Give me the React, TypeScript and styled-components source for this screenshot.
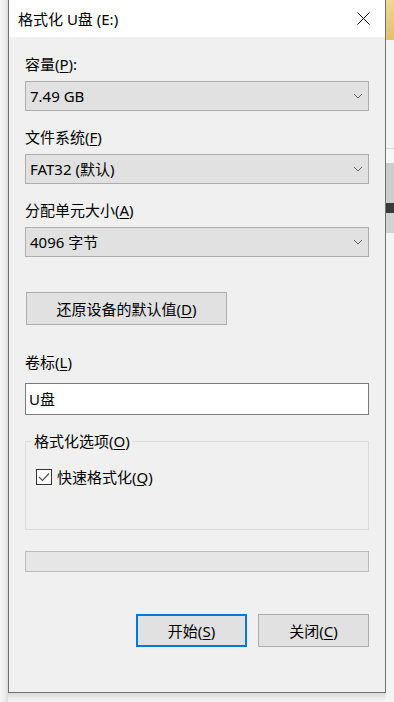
import React from 'react';
import styled, {createGlobalStyle} from 'styled-components';

const GlobalStyle = createGlobalStyle`
  html, body {
    margin: 0;
    padding: 0;
    background: #f4f4f4;
  }

  body {
    font-family: "Segoe UI", "Noto Sans", "Noto Sans CJK SC", sans-serif;
    font-size: 15px;
    line-height: 20px;
    color: #000000;
  }

  u {
    text-decoration-thickness: 1px;
    text-underline-offset: 2px;
  }
`;

const Screen = styled.div`
  display: flex;
  width: 394px;
  height: 702px;
  overflow: hidden;
`;

const LeftShade = styled.div`
  width: 8px;
  flex: none;
  background: linear-gradient(to right, #f6f6f6 0%, #ececec 60%, #d9d9d9 100%);
`;

const WindowColumn = styled.div`
  width: 378px;
  flex: none;
  display: flex;
  flex-direction: column;
`;

const Window = styled.div`
  display: flex;
  flex-direction: column;
  border: 1px solid #707070;
  border-top: none;
  background: #f0f0f0;
`;

const BottomShade = styled.div`
  flex: 1;
  background: linear-gradient(to bottom, #dadada 0%, #ececec 60%, #f5f5f5 100%);
`;

const Backdrop = styled.div`
  width: 8px;
  flex: none;
  display: flex;
  flex-direction: column;
  background: #f3f3f3;
`;

const Band = styled.div<{ $h: number; $bg: string }>`
  height: ${p => p.$h}px;
  flex: none;
  background: ${p => p.$bg};
`;

const TitleBar = styled.div`
  height: 37px;
  display: flex;
  align-items: center;
  justify-content: space-between;
  background: #ffffff;
  padding-left: 9px;
`;

const Title = styled.span`
  font-size: 15px;
  line-height: 20px;
  white-space: nowrap;
`;

const CloseButton = styled.div`
  width: 44px;
  height: 37px;
  display: flex;
  align-items: center;
  justify-content: center;
`;

const Body = styled.div`
  display: flex;
  flex-direction: column;
  padding: 17px 16px 45px 16px;
`;

const Label = styled.div<{ $gap?: number }>`
  height: 20px;
  line-height: 20px;
  margin-bottom: ${p => p.$gap ?? 7}px;
  white-space: nowrap;
`;

const Field = styled.div`
  display: flex;
  flex-direction: column;
  margin-bottom: 16px;
`;

const Select = styled.div`
  height: 30px;
  box-sizing: border-box;
  border: 1px solid #adadad;
  background: #e1e1e1;
  display: flex;
  align-items: center;
  justify-content: space-between;
  padding: 0 5px 0 4px;
`;

const Button = styled.div<{ $primary?: boolean; $width: number }>`
  width: ${p => p.$width}px;
  height: 33px;
  box-sizing: border-box;
  border: ${p => (p.$primary ? '2px solid #0078d7' : '1px solid #adadad')};
  background: #e1e1e1;
  display: flex;
  align-items: center;
  justify-content: center;
  white-space: nowrap;
`;

const RestoreButton = styled(Button)`
  margin: 19px 0 0 1px;
`;

const TextInput = styled.div`
  height: 32px;
  box-sizing: border-box;
  border: 1px solid #7a7a7a;
  background: #ffffff;
  display: flex;
  align-items: center;
  padding-left: 3px;
`;

const Group = styled.fieldset`
  margin: 16px 0 0 0;
  padding: 0;
  border: 1px solid #dcdcdc;
  min-width: 0;
`;

const Legend = styled.legend`
  margin-left: 5px;
  padding: 0 3px;
  line-height: 20px;
  white-space: nowrap;
`;

const GroupInner = styled.div`
  height: 78px;
  box-sizing: border-box;
  padding: 16px 0 0 10px;
`;

const CheckRow = styled.div`
  display: flex;
  align-items: center;
  gap: 5px;
  height: 20px;
`;

const CheckBox = styled.div`
  width: 16px;
  height: 16px;
  box-sizing: border-box;
  border: 1px solid #333333;
  background: #ffffff;
  display: flex;
  align-items: center;
  justify-content: center;
`;

const Progress = styled.div`
  height: 21px;
  margin-top: 21px;
  box-sizing: border-box;
  border: 1px solid #bcbcbc;
  background: #e6e6e6;
`;

const ButtonRow = styled.div`
  display: flex;
  justify-content: flex-end;
  gap: 11px;
  margin-top: 42px;
`;

const Chevron = () => (
  <svg width="10" height="6" viewBox="0 0 10 6">
    <path d="M1 1 L5 5 L9 1" fill="none" stroke="#606060" strokeWidth="1"/>
  </svg>
);

const CloseIcon = () => (
  <svg width="13" height="13" viewBox="0 0 13 13">
    <path d="M0.5 0.5 L12.5 12.5 M12.5 0.5 L0.5 12.5" stroke="#000000" strokeWidth="1"/>
  </svg>
);

const CheckMark = () => (
  <svg width="12" height="10" viewBox="0 0 12 10">
    <path d="M1 5 L4.5 8.5 L11 1.5" fill="none" stroke="#555555" strokeWidth="1.2"/>
  </svg>
);

type FieldData = { label: React.ReactNode; value: string };

const fields: FieldData[] = [
  {label: <>容量(<u>P</u>):</>, value: '7.49 GB'},
  {label: <>文件系统(<u>F</u>)</>, value: 'FAT32 (默认)'},
  {label: <>分配单元大小(<u>A</u>)</>, value: '4096 字节'},
];

const backdrop = [
  {h: 40, bg: 'linear-gradient(160deg, #f1d894, #e2bf6e)'},
  {h: 108, bg: '#f4f4f4'},
  {h: 1, bg: '#d6d6d6'},
  {h: 14, bg: '#f7f7f7'},
  {h: 40, bg: '#cdcdcd'},
  {h: 10, bg: '#3a3a3a'},
  {h: 20, bg: '#d2d2d2'},
  {h: 469, bg: '#f4f4f4'},
];

export default function App() {
  return (
    <>
      <GlobalStyle/>
      <Screen>
        <LeftShade/>
        <WindowColumn>
          <Window>
            <TitleBar>
              <Title>格式化 U盘 (E:)</Title>
              <CloseButton><CloseIcon/></CloseButton>
            </TitleBar>
            <Body>
              {fields.map((f, i) => (
                <Field key={i}>
                  <Label>{f.label}</Label>
                  <Select>
                    <span>{f.value}</span>
                    <Chevron/>
                  </Select>
                </Field>
              ))}
              <RestoreButton $width={201}>还原设备的默认值(<u>D</u>)</RestoreButton>
              <Label $gap={11} style={{marginTop: 27}}>卷标(<u>L</u>)</Label>
              <TextInput>U盘</TextInput>
              <Group>
                <Legend>格式化选项(<u>O</u>)</Legend>
                <GroupInner>
                  <CheckRow>
                    <CheckBox><CheckMark/></CheckBox>
                    <span>快速格式化(<u>Q</u>)</span>
                  </CheckRow>
                </GroupInner>
              </Group>
              <Progress/>
              <ButtonRow>
                <Button $primary $width={111}>开始(<u>S</u>)</Button>
                <Button $width={111}>关闭(<u>C</u>)</Button>
              </ButtonRow>
            </Body>
          </Window>
          <BottomShade/>
        </WindowColumn>
        <Backdrop>
          {backdrop.map((b, i) => <Band key={i} $h={b.h} $bg={b.bg}/>)}
        </Backdrop>
      </Screen>
    </>
  );
}
